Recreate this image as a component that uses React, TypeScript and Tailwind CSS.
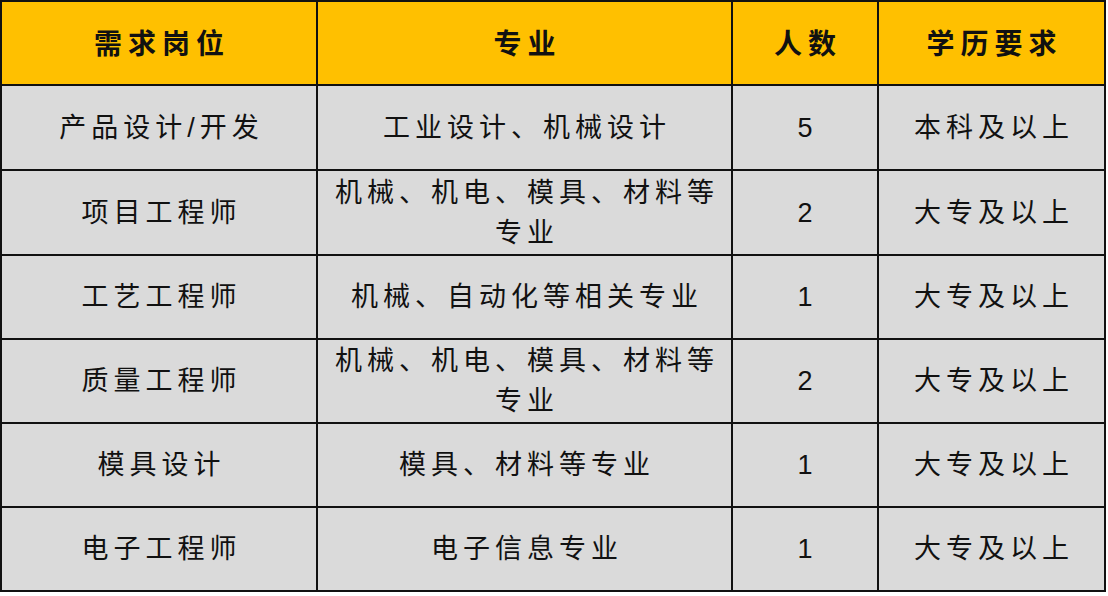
const headers = ["需求岗位", "专业", "人数", "学历要求"];

const rows = [
  ["产品设计/开发", "工业设计、机械设计", "5", "本科及以上"],
  ["项目工程师", "机械、机电、模具、材料等专业", "2", "大专及以上"],
  ["工艺工程师", "机械、自动化等相关专业", "1", "大专及以上"],
  ["质量工程师", "机械、机电、模具、材料等专业", "2", "大专及以上"],
  ["模具设计", "模具、材料等专业", "1", "大专及以上"],
  ["电子工程师", "电子信息专业", "1", "大专及以上"],
];

const font = { fontFamily: '"Liberation Sans", "Noto Sans CJK SC", sans-serif' };

export default function App() {
  return (
    <div className="w-[1108px] h-[596px] bg-white" style={font}>
      <div className="grid w-[1106px] grid-cols-[314px_413px_144px_225px] grid-rows-[82px_83px_83px_82px_82px_82px_82px] gap-[2px] border-2 border-[#111] bg-[#111] text-[#111]">
        {headers.map((h) => (
          <div
            key={h}
            className="flex items-center justify-center bg-[#ffc000] pt-[4px] pl-[6px] text-[28px] font-bold tracking-[6px]"
          >
            {h}
          </div>
        ))}
        {rows.map((r, i) =>
          r.map((cell, j) => (
            <div
              key={i + "-" + j}
              className="flex items-center justify-center bg-[#dadada] px-[12px] pl-[17px] text-center text-[27px] leading-[40px] tracking-[5px]"
            >
              {cell}
            </div>
          ))
        )}
      </div>
    </div>
  );
}
